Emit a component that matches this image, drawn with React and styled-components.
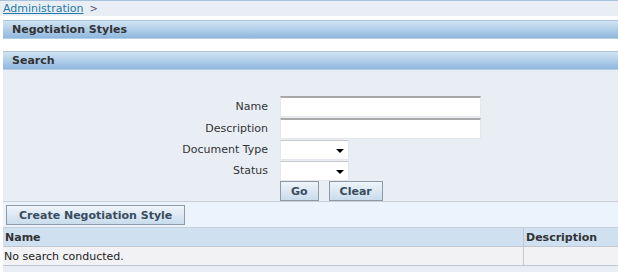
import React from "react";
import styled, { createGlobalStyle } from "styled-components";

const Global = createGlobalStyle`
  html, body { margin: 0; padding: 0; background: #ffffff; }
  body { font-family: Tahoma, "DejaVu Sans", sans-serif; font-size: 12px; color: #333; }
`;

const Page = styled.div`
  width: 618px;
  display: flex;
  flex-direction: column;
`;

const Breadcrumb = styled.div`
  height: 15px;
  border-top: 1px solid #a9c3df;
  background: #e9eef5;
  padding-left: 3px;
  display: flex;
  align-items: center;
  gap: 6px;
  font-size: 11px;
  line-height: 15px;
`;

const Crumb = styled.a`
  color: #1f7ba6;
  text-decoration: underline;
`;

const Sep = styled.span`
  color: #557;
  font-size: 10px;
`;

const Body = styled.div`
  padding: 4px 0 0 3px;
  display: flex;
  flex-direction: column;
`;

const SectionBar = styled.div`
  height: 17px;
  border-top: 1px solid #a8c3e0;
  border-bottom: 1px solid #b5cde6;
  background: linear-gradient(#d2e3f3, #8fb8de);
  padding-left: 9px;
  font-weight: bold;
  font-size: 11px;
  color: #333;
  display: flex;
  align-items: center;
  margin-top: ${p => p.$gap || 0}px;
`;

const SearchArea = styled.div`
  background: #e9eef5;
  padding-top: 25px;
  border-bottom: 1px solid #c8ced6;
`;

const Form = styled.div`
  display: grid;
  grid-template-columns: 265px auto;
  column-gap: 12px;
  justify-content: start;
  align-items: center;
`;

const Label = styled.label`
  text-align: right;
  font-size: 11px;
  color: #333;
`;

const Cell = styled.div`
  height: ${p => p.$h}px;
  display: flex;
  align-items: center;
  gap: 10px;
`;

const TextInput = styled.input`
  box-sizing: border-box;
  width: 201px;
  height: 21px;
  border: 1px solid #e4e8ee;
  border-top: 2px solid #a8a8a8;
  background: #fff;
  margin: 0;
  padding: 0;
`;

const SelectBox = styled.div`
  box-sizing: border-box;
  width: 69px;
  height: 20px;
  background: #fff;
  border: 1px solid #e4e8ee;
  border-top: 1px solid #c8c8c8;
  display: flex;
  align-items: center;
  justify-content: flex-end;
  padding-right: 4px;
`;

const Arrow = styled.span`
  width: 0;
  height: 0;
  border-left: 4px solid transparent;
  border-right: 4px solid transparent;
  border-top: 4px solid #000;
  margin-top: 2px;
`;

const Button = styled.button`
  box-sizing: border-box;
  height: 20px;
  padding: 0 ${p => p.$pad || 10}px;
  border: 1px solid #8e9aa6;
  background: linear-gradient(#eef4fa, #c9dcec);
  font-family: Tahoma, "DejaVu Sans", sans-serif;
  font-weight: bold;
  font-size: 11px;
  color: #3a4c5f;
  margin: 0;
  cursor: pointer;
`;

const ActionBar = styled.div`
  background: #ebf3fd;
  padding: 3px 3px 2px;
  border-bottom: 1px solid #c8ced6;
`;

const Table = styled.div`
  display: grid;
  grid-template-columns: 520px 1fr;
`;

const Th = styled.div`
  height: 18px;
  background: #cfe0f1;
  border-bottom: 1px solid #c2c8cf;
  border-left: ${p => (p.$divider ? "1px solid #c2c8cf" : "none")};
  font-weight: bold;
  font-size: 11px;
  padding-left: 2px;
  display: flex;
  align-items: center;
  color: #333;
`;

const Td = styled.div`
  height: 18px;
  background: #f2f2f4;
  border-bottom: 1px solid #c2c8cf;
  border-left: ${p => (p.$divider ? "1px solid #c2c8cf" : "none")};
  font-size: 11px;
  padding-left: 1px;
  display: flex;
  align-items: center;
  color: #222;
`;

const Footer = styled.div`
  height: 10px;
  background: #e9eef5;
`;

export default function App() {
  return (
    <Page>
      <Global />
      <Breadcrumb>
        <Crumb href="#">Administration</Crumb>
        <Sep>&gt;</Sep>
      </Breadcrumb>
      <Body>
        <SectionBar>Negotiation Styles</SectionBar>
        <SectionBar $gap={12}>Search</SectionBar>
        <SearchArea>
          <Form>
            <Label>Name</Label>
            <Cell $h={22}><TextInput /></Cell>
            <Label>Description</Label>
            <Cell $h={22}><TextInput /></Cell>
            <Label>Document Type</Label>
            <Cell $h={21}><SelectBox><Arrow /></SelectBox></Cell>
            <Label>Status</Label>
            <Cell $h={21}><SelectBox><Arrow /></SelectBox></Cell>
            <span />
            <Cell $h={20}>
              <Button $pad={10}>Go</Button>
              <Button $pad={10}>Clear</Button>
            </Cell>
          </Form>
        </SearchArea>
        <ActionBar>
          <Button $pad={12}>Create Negotiation Style</Button>
        </ActionBar>
        <Table>
          <Th>Name</Th>
          <Th $divider>Description</Th>
          <Td>No search conducted.</Td>
          <Td $divider />
        </Table>
        <Footer />
      </Body>
    </Page>
  );
}
